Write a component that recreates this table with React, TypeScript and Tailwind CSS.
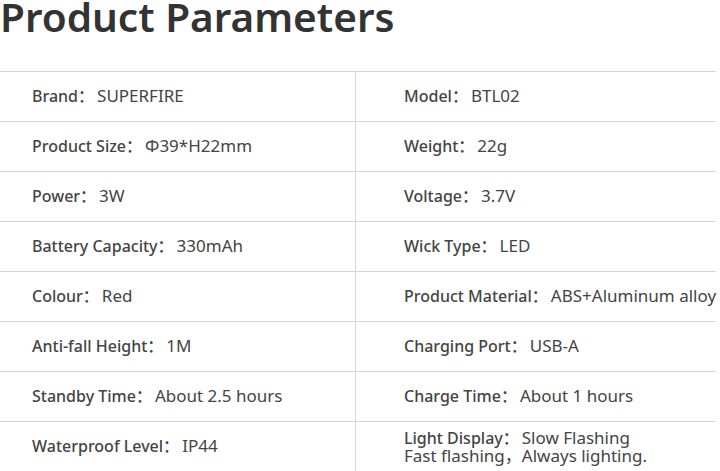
const rows: [string, string, string, string][] = [
  ['Brand', 'SUPERFIRE', 'Model', 'BTL02'],
  ['Product Size', 'Φ39*H22mm', 'Weight', '22g'],
  ['Power', '3W', 'Voltage', '3.7V'],
  ['Battery Capacity', '330mAh', 'Wick Type', 'LED'],
  ['Colour', 'Red', 'Product Material', 'ABS+Aluminum alloy'],
  ['Anti-fall Height', '1M', 'Charging Port', 'USB-A'],
  ['Standby Time', 'About 2.5 hours', 'Charge Time', 'About 1 hours'],
];

function Cell({ label, value }: { label: string; value: string }) {
  return (
    <div className="whitespace-nowrap">
      <span className="font-medium">{label}：</span>
      <span className="ml-[3px] text-[17px]">{value}</span>
    </div>
  );
}

export default function App() {
  return (
    <div
      className="h-[471px] w-[720px] overflow-hidden bg-white text-[#444]"
      style={{ fontFamily: '"Noto Sans", "Noto Sans CJK SC", sans-serif' }}
    >
      <h1 className="-mt-[3px] h-[74px] text-[40.5px] font-semibold leading-[40px] text-[#333]">
        Product Parameters
      </h1>
      <div className="w-[716px] text-[16px]">
        {rows.map(([l1, v1, l2, v2]) => (
          <div key={l1} className="grid h-[50px] grid-cols-[356px_1fr] border-t border-[#d4d4d4]">
            <div className="flex items-center border-r border-[#d4d4d4] pb-[2px] pl-8">
              <Cell label={l1} value={v1} />
            </div>
            <div className="flex items-center pb-[2px] pl-[48px]">
              <Cell label={l2} value={v2} />
            </div>
          </div>
        ))}
        <div className="grid h-[50px] grid-cols-[356px_1fr] border-t border-[#d4d4d4]">
          <div className="flex items-center border-r border-[#d4d4d4] pb-[2px] pl-8">
            <Cell label="Waterproof Level" value="IP44" />
          </div>
          <div className="flex flex-col justify-center pb-[1px] pl-[48px] leading-[17px]">
            <Cell label="Light Display" value="Slow Flashing" />
            <div className="whitespace-nowrap text-[17px]">Fast flashing，Always lighting.</div>
          </div>
        </div>
      </div>
    </div>
  );
}
